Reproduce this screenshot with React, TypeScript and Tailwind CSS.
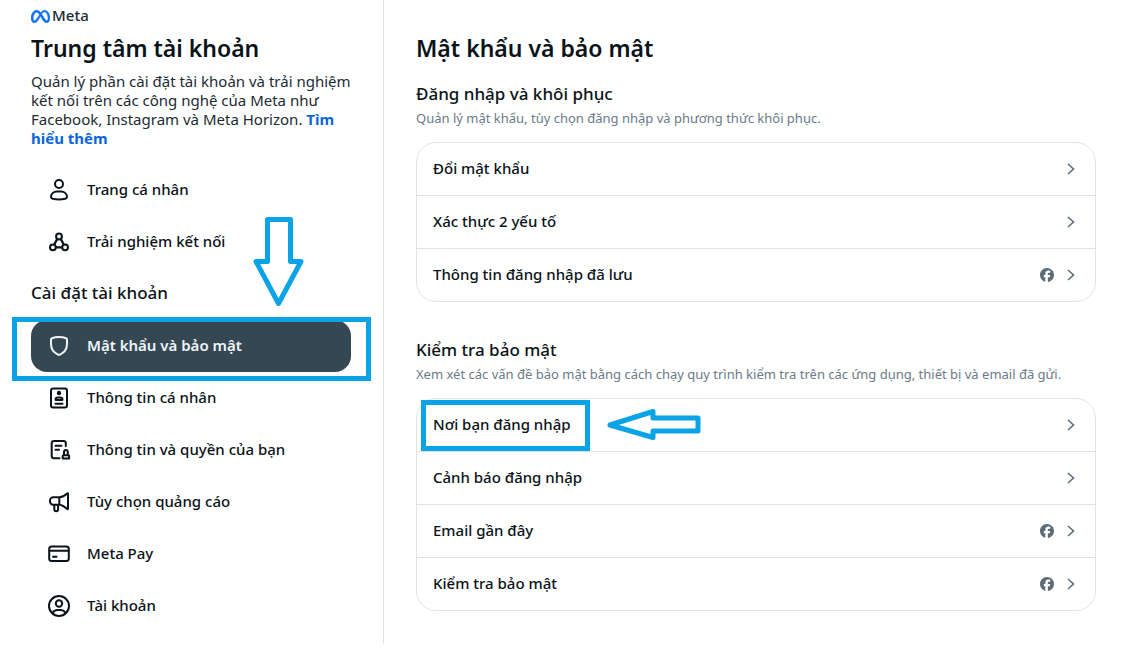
import React from "react";
import { FaMeta, FaFacebook } from "react-icons/fa6";

type IconProps = { children: React.ReactNode };

function Icon({ children }: IconProps) {
  return (
    <svg
      viewBox="0 0 24 24"
      className="size-6 shrink-0"
      fill="none"
      stroke="currentColor"
      strokeWidth="2"
      strokeLinecap="round"
      strokeLinejoin="round"
      aria-hidden="true"
    >
      {children}
    </svg>
  );
}

const ProfileIcon = () => (
  <Icon>
    <circle cx="12" cy="6" r="4" />
    <path d="M10 13.500h4c3.600 0 6 2.600 6 5.200 0 1.100-.6 1.800-1.700 2.100-4 1-8.600 1-12.600 0C4.600 20.500 4 19.800 4 18.700c0-2.600 2.400-5.200 6-5.200z" />
  </Icon>
);

const NetworkIcon = () => (
  <Icon>
    <circle cx="12" cy="6.500" r="2.900" />
    <circle cx="5.900" cy="17.300" r="2.900" />
    <circle cx="18.100" cy="17.300" r="2.900" />
    <path d="M10.200 9 7.300 14.500M13.800 9 16.700 14.500M9 17.300h6" strokeWidth="2.300" />
  </Icon>
);

const ShieldIcon = () => (
  <Icon>
    <path d="M12 3c2.500 0 5.200.5 7 1.200.7.3 1 .8 1 1.500V10c0 5.300-3 8.700-7 10.600a2.200 2.200 0 0 1-2 0C7 18.700 4 15.300 4 10V5.700c0-.7.3-1.200 1-1.500C6.800 3.500 9.500 3 12 3z" />
  </Icon>
);

const IdIcon = () => (
  <Icon>
    <rect x="4" y="2.500" width="16" height="19" rx="2" />
    <circle cx="12" cy="7" r="2.200" fill="currentColor" stroke="none" />
    <path d="M11 11.500h2c1.500 0 2.500.8 2.500 1.900 0 .4-.3.600-.7.600H9.200c-.4 0-.7-.2-.7-.6 0-1.100 1-1.900 2.500-1.900zM8.500 17.700h7" />
  </Icon>
);

const PermissionIcon = () => (
  <Icon>
    <path d="M12.500 20.300H7A2.300 2.300 0 0 1 4.700 18V5.300A2.300 2.300 0 0 1 7 3h9.500a2.300 2.300 0 0 1 2.300 2.300V8M8.500 7.700h6M8.500 11.700H12" />
    <path d="M17 17.200v-3.200a1.900 1.900 0 0 1 3.800 0v3.200M16.500 17.300h4.800a.8.8 0 0 1 .8.8v2.400h-6.400v-2.400a.8.8 0 0 1 .8-.8z" />
  </Icon>
);

const MegaphoneIcon = () => (
  <Icon>
    <path d="M21 4v14.700c0 .5-.4.700-.8.400-2.200-2-4.700-4-7.700-4.300H6.300A3.300 3.300 0 0 1 3 11.500v-1a3.300 3.300 0 0 1 3.300-3.300h6.200c3 0 5.500-1.700 7.700-3.700.4-.3.800-.1.800.5zM12.300 7.500v7M7.300 15v4.300a1.900 1.900 0 0 0 3.800 0V15" />
  </Icon>
);

const CardIcon = () => (
  <Icon>
    <rect x="2.200" y="4.500" width="19.600" height="14.500" rx="2.500" />
    <path d="M2.500 8.700h19M6 14.700h3.500" />
  </Icon>
);

const AccountIcon = () => (
  <Icon>
    <circle cx="12" cy="12" r="10" />
    <circle cx="12" cy="9.500" r="3.200" />
    <path d="M5.500 19c1-2 2.800-3 5-3h3c2.200 0 4 1 5 3" />
  </Icon>
);

const Chevron = () => (
  <svg
    viewBox="0 0 12 12"
    className="size-3 shrink-0 text-[#5d6c7b]"
    fill="none"
    stroke="currentColor"
    strokeWidth="1.600"
    aria-hidden="true"
  >
    <path d="M3 1l5.500 5L3 11" />
  </svg>
);

type NavItemProps = {
  icon: React.ReactNode;
  label: string;
  active?: boolean;
  children?: React.ReactNode;
};

function NavItem({ icon, label, active, children }: NavItemProps) {
  return (
    <li className="relative">
      <a
        href="#"
        aria-current={active ? "page" : undefined}
        className={
          active
            ? "flex h-13 items-center gap-4 rounded-2xl bg-[#344854] px-4 font-semibold text-[#f1f4f7]"
            : "flex h-13 items-center gap-4 rounded-2xl px-4 font-medium"
        }
      >
        {icon}
        <span className="pb-0.5">{label}</span>
      </a>
      {children}
    </li>
  );
}

type Row = { label: string; facebook?: boolean; marked?: boolean };

function SettingsRow({ label, facebook, marked }: Row) {
  return (
    <li className="relative border-b border-[#dee3e9] last:border-b-0">
      <button type="button" className="flex h-13 w-full items-center gap-[11px] pr-4.5 pl-4 text-left font-medium">
        <span className="grow pb-0.5">{label}</span>
        {facebook && <FaFacebook className="size-3.5 text-[#5d6c7b]" aria-label="Facebook" />}
        <Chevron />
      </button>
      {marked && (
        <div className="pointer-events-none absolute inset-y-0 left-1 flex items-center gap-4">
          <div className="h-[51px] w-[169px] border-5 border-[#0aa3e6]" />
          <svg viewBox="0 0 96 36" className="h-9 w-24" fill="none" stroke="#0aa3e6" strokeWidth="5" aria-hidden="true">
            <path d="M4 18 47 4.500V11h45v13H47v6.500z" strokeLinejoin="round" />
          </svg>
        </div>
      )}
    </li>
  );
}

type SectionProps = { title: string; note: string; rows: Row[] };

function Section({ title, note, rows }: SectionProps) {
  return (
    <section>
      <h2 className="text-[17px] leading-6 font-medium">{title}</h2>
      <p className="mt-0.5 text-[13px] leading-5 text-[#6b7a88]">{note}</p>
      <ul className="mt-3.5 rounded-[20px] border border-[#dee3e9]">
        {rows.map((row) => (
          <SettingsRow key={row.label} {...row} />
        ))}
      </ul>
    </section>
  );
}

const recovery: Row[] = [
  { label: "Đổi mật khẩu" },
  { label: "Xác thực 2 yếu tố" },
  { label: "Thông tin đăng nhập đã lưu", facebook: true },
];

const checks: Row[] = [
  { label: "Nơi bạn đăng nhập", marked: true },
  { label: "Cảnh báo đăng nhập" },
  { label: "Email gần đây", facebook: true },
  { label: "Kiểm tra bảo mật", facebook: true },
];

export default function App() {
  return (
    <div className="flex bg-white pb-1 font-['Noto_Sans',sans-serif] text-[15px] text-[#0a1317]">
      <aside className="w-96 shrink-0 border-r border-[#dee3e9] pt-1.5 pr-8 pb-3 pl-[31px]">
        <div className="flex h-5 items-center gap-0.5 text-[15px] font-medium text-[#1c2b33]">
          <FaMeta className="h-[15px] w-[19px] stroke-current stroke-[20] text-[#0a6fe8]" aria-hidden="true" />
          <span className="pb-0.5">Meta</span>
        </div>
        <h1 className="mt-2 text-[23px] leading-7 font-semibold">Trung tâm tài khoản</h1>
        <p className="mt-2.5 text-[15px] leading-[19px] text-[#1c2b33]">
          Quản lý phần cài đặt tài khoản và trải nghiệm kết nối trên các công nghệ của Meta như Facebook, Instagram và
          Meta Horizon.{" "}
          <a href="#" className="font-bold text-[#0a66dc]">
            Tìm hiểu thêm
          </a>
        </p>
        <nav className="mt-4">
          <ul>
            <NavItem icon={<ProfileIcon />} label="Trang cá nhân" />
            <NavItem icon={<NetworkIcon />} label="Trải nghiệm kết nối">
              <svg
                viewBox="0 0 52 92"
                className="pointer-events-none absolute top-0 right-[47px] h-[92px] w-[52px]"
                fill="none"
                stroke="#0aa3e6"
                strokeWidth="5"
                strokeLinejoin="round"
                aria-hidden="true"
              >
                <path d="M15.500 3.500h23v42H49L26.500 87.500 4 45.500h11.500z" />
              </svg>
            </NavItem>
          </ul>
          <h2 className="pt-[13px] pb-[15px] text-[17px] leading-6 font-medium">Cài đặt tài khoản</h2>
          <ul>
            <NavItem icon={<ShieldIcon />} label="Mật khẩu và bảo mật" active>
              <div className="pointer-events-none absolute -top-[3px] -right-5 -bottom-[9px] -left-[19px] z-10 border-5 border-[#0aa3e6]" />
            </NavItem>
            <NavItem icon={<IdIcon />} label="Thông tin cá nhân" />
            <NavItem icon={<PermissionIcon />} label="Thông tin và quyền của bạn" />
            <NavItem icon={<MegaphoneIcon />} label="Tùy chọn quảng cáo" />
            <NavItem icon={<CardIcon />} label="Meta Pay" />
            <NavItem icon={<AccountIcon />} label="Tài khoản" />
          </ul>
        </nav>
      </aside>
      <main className="flex min-w-0 grow flex-col pt-8 pr-[26px] pl-8">
        <h1 className="text-[23px] leading-8 font-semibold">Mật khẩu và bảo mật</h1>
        <div className="mt-[18px] flex flex-col gap-9">
          <Section title="Đăng nhập và khôi phục" note="Quản lý mật khẩu, tùy chọn đăng nhập và phương thức khôi phục." rows={recovery} />
          <Section
            title="Kiểm tra bảo mật"
            note="Xem xét các vấn đề bảo mật bằng cách chạy quy trình kiểm tra trên các ứng dụng, thiết bị và email đã gửi."
            rows={checks}
          />
        </div>
      </main>
    </div>
  );
}
